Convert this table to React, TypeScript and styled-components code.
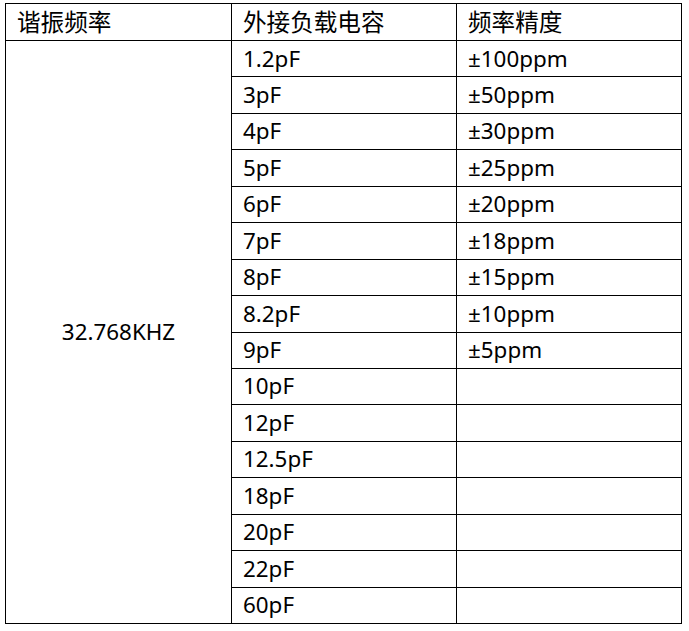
import React from "react";
import styled, { createGlobalStyle } from "styled-components";

const GlobalStyle = createGlobalStyle`
  html, body {
    margin: 0;
    padding: 0;
    background: #ffffff;
  }
  body {
    font-family: "Noto Sans", "Noto Sans CJK SC", sans-serif;
    color: #000;
  }
`;

const Page = styled.div`
  padding: 3px 0 0 5px;
  width: 689px;
  height: 631px;
  overflow: hidden;
  box-sizing: border-box;
`;

const Table = styled.table`
  border-collapse: collapse;
  table-layout: fixed;
  width: 676px;
  font-size: 22.4px;
  font-family: "Noto Sans", "Noto Sans CJK SC", sans-serif;
`;

const Cell = styled.td<{ $center?: boolean; $header?: boolean }>`
  border: 1px solid #000;
  padding: 0 0 0 ${(p) => (p.$header ? "11px" : "11px")};
  height: ${(p) => (p.$header ? "36px" : "35.44px")};
  font-size: ${(p) => (p.$header ? "23.6px" : "22.4px")};
  font-family: ${(p) =>
    p.$header
      ? `"Noto Sans CJK SC", sans-serif`
      : `"Noto Sans", "Noto Sans CJK SC", sans-serif`};
  text-align: ${(p) => (p.$center ? "center" : "left")};
  vertical-align: middle;
  white-space: nowrap;
  line-height: 1;
  font-weight: 400;
  ${(p) => (p.$center ? "padding: 0;" : "")}
`;

const Note = styled.div`
  margin-top: 4px;
  padding-left: 13px;
  font-size: 22px;
  font-family: "Noto Sans CJK SC", sans-serif;
  color: #333;
`;

const rows: [string, string][] = [
  ["1.2pF", "±100ppm"],
  ["3pF", "±50ppm"],
  ["4pF", "±30ppm"],
  ["5pF", "±25ppm"],
  ["6pF", "±20ppm"],
  ["7pF", "±18ppm"],
  ["8pF", "±15ppm"],
  ["8.2pF", "±10ppm"],
  ["9pF", "±5ppm"],
  ["10pF", ""],
  ["12pF", ""],
  ["12.5pF", ""],
  ["18pF", ""],
  ["20pF", ""],
  ["22pF", ""],
  ["60pF", ""],
];

export default function App() {
  return (
    <>
      <GlobalStyle />
      <Page>
        <Table>
          <colgroup>
            <col style={{ width: 226 }} />
            <col style={{ width: 225 }} />
            <col style={{ width: 225 }} />
          </colgroup>
          <thead>
            <tr>
              <Cell as="th" $header>谐振频率</Cell>
              <Cell as="th" $header>外接负载电容</Cell>
              <Cell as="th" $header>频率精度</Cell>
            </tr>
          </thead>
          <tbody>
            {rows.map(([cap, acc], i) => (
              <tr key={cap}>
                {i === 0 && (
                  <Cell rowSpan={rows.length} $center>
                    32.768KHZ
                  </Cell>
                )}
                <Cell>{cap}</Cell>
                <Cell>{acc}</Cell>
              </tr>
            ))}
          </tbody>
        </Table>
        <Note>注：</Note>
      </Page>
    </>
  );
}
